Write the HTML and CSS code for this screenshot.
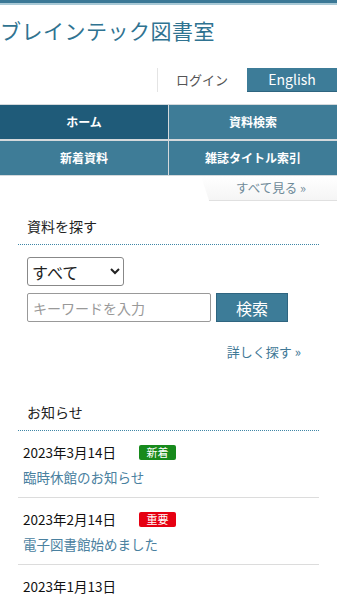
FILE: index.html
```html
<!DOCTYPE html>
<html lang="ja">
<head>
  <meta charset="UTF-8" />
  <meta name="viewport" content="width=device-width, initial-scale=1.0"/>
  <title>ブレインテック図書室</title>
  <link rel="stylesheet" href="styles.css">
</head>
<body>

  <div class="topbar"></div>

  <header class="site-head">
    <h1 class="site-title">ブレインテック図書室</h1>
    <div class="util">
      <a href="#" class="login">ログイン</a>
      <a href="#" class="lang">English</a>
    </div>
  </header>

  <nav class="gnav">
    <a href="#" class="current">ホーム</a>
    <a href="#">資料検索</a>
    <a href="#">新着資料</a>
    <a href="#">雑誌タイトル索引</a>
  </nav>

  <div class="more-row">
    <a href="#" class="more-tab">すべて見る »</a>
  </div>

  <section class="box">
    <h2 class="box-title">資料を探す</h2>
    <div class="search">
      <select class="kind">
        <option>すべて</option>
      </select>
      <div class="search-line">
        <input type="text" placeholder="キーワードを入力">
        <button class="btn">検索</button>
      </div>
    </div>
    <p class="detail"><a href="#">詳しく探す »</a></p>
  </section>

  <section class="box news">
    <h2 class="box-title">お知らせ</h2>
    <ul class="news-list">
      <li>
        <div class="news-date">2023年3月14日 <span class="tag new">新着</span></div>
        <a href="#">臨時休館のお知らせ</a>
      </li>
      <li>
        <div class="news-date">2023年2月14日 <span class="tag important">重要</span></div>
        <a href="#">電子図書館始めました</a>
      </li>
      <li>
        <div class="news-date">2023年1月13日</div>
      </li>
    </ul>
  </section>

</body>
</html>
```

FILE: styles.css
```css
body {
  margin: 0;
  padding: 0;
  font-family: "Noto Sans CJK JP", "Noto Sans", sans-serif;
  color: #222;
  background: #fff;
}

a {
  text-decoration: none;
}

.topbar {
  height: 3px;
  background: #3b7896;
  border-bottom: 2px solid #a9c9d6;
}

.site-title {
  margin: 11px 0 0;
  font-size: 21px;
  font-weight: normal;
  line-height: 28px;
  color: #2f7391;
  letter-spacing: 0.5px;
}

.util {
  display: flex;
  justify-content: flex-end;
  margin-top: 24px;
  height: 24px;
}

.login {
  width: 88px;
  border-left: 1px solid #e4e4e4;
  text-align: center;
  font-size: 13px;
  line-height: 24px;
  color: #555;
}

.lang {
  width: 90px;
  margin-left: 1px;
  background: #3d7c98;
  color: #fff;
  text-align: center;
  font-size: 14px;
  line-height: 23px;
  border-bottom: 1px solid #2e6580;
}

.gnav {
  display: grid;
  grid-template-columns: 1fr 1fr;
  gap: 2px 1px;
  margin-top: 12px;
  background: #d4d9dc;
  border-top: 1px solid #d4d9dc;
  border-bottom: 1px solid #d4d9dc;
}

.gnav a {
  height: 34px;
  line-height: 34px;
  text-align: center;
  font-size: 12px;
  font-weight: bold;
  color: #fff;
  background: #3e7c97;
}

.gnav a.current {
  background: #1f5b79;
}

.more-row {
  display: flex;
  justify-content: flex-end;
}

.more-tab {
  width: 132px;
  height: 24px;
  line-height: 23px;
  padding-left: 4px;
  text-align: center;
  font-size: 12.5px;
  color: #6e8a98;
  background: linear-gradient(#fff, #f5f5f5);
  border-bottom: 1px solid #e0e0e0;
  clip-path: polygon(0 0, 100% 0, 100% 100%, 6% 100%);
}

.box {
  margin: 0 18px;
}

.box-title {
  margin: 15px 0 0;
  padding: 0 0 8px 9px;
  font-size: 14px;
  font-weight: normal;
  line-height: 20px;
  border-bottom: 1px dotted #3f86a6;
}

.search {
  padding: 12px 0 0 9px;
}

.kind {
  display: block;
  width: 97px;
  height: 29px;
  font-family: inherit;
  font-size: 16px;
  color: #222;
  border: 1px solid #888;
  border-radius: 3px;
  background: #fff;
}

.search-line {
  display: flex;
  gap: 5px;
  margin-top: 7px;
}

.search-line input {
  width: 184px;
  height: 29px;
  box-sizing: border-box;
  padding: 0 5px;
  font-family: inherit;
  font-size: 14px;
  border: 1px solid #999;
  border-radius: 2px;
}

.search-line input::placeholder {
  color: #999;
}

.btn {
  width: 72px;
  height: 29px;
  font-family: inherit;
  font-size: 16px;
  color: #fff;
  background: #3d7c98;
  border: 1px solid #2f6580;
}

.detail {
  margin: 20px 0 0;
  text-align: right;
  font-size: 13px;
  line-height: 20px;
  padding-right: 18px;
}

.detail a {
  color: #3f7896;
}

.news .box-title {
  margin-top: 40px;
}

.news-list {
  list-style: none;
  margin: 0;
  padding: 0;
}

.news-list li {
  padding: 10px 0 10px 5px;
  border-bottom: 1px solid #dcdcdc;
}

.news-list li:last-child {
  border-bottom: none;
}

.news-date {
  display: flex;
  align-items: center;
  font-size: 13.5px;
  line-height: 22px;
  color: #111;
}

.tag {
  margin-left: 23px;
  width: 37px;
  height: 15px;
  line-height: 15px;
  border-radius: 2px;
  text-align: center;
  font-size: 11px;
  color: #fff;
}

.tag.new {
  background: #178a1c;
}

.tag.important {
  background: #e60012;
}

.news-list a {
  display: block;
  margin-top: 4px;
  font-size: 13.5px;
  line-height: 20px;
  color: #4a81a0;
}
```
